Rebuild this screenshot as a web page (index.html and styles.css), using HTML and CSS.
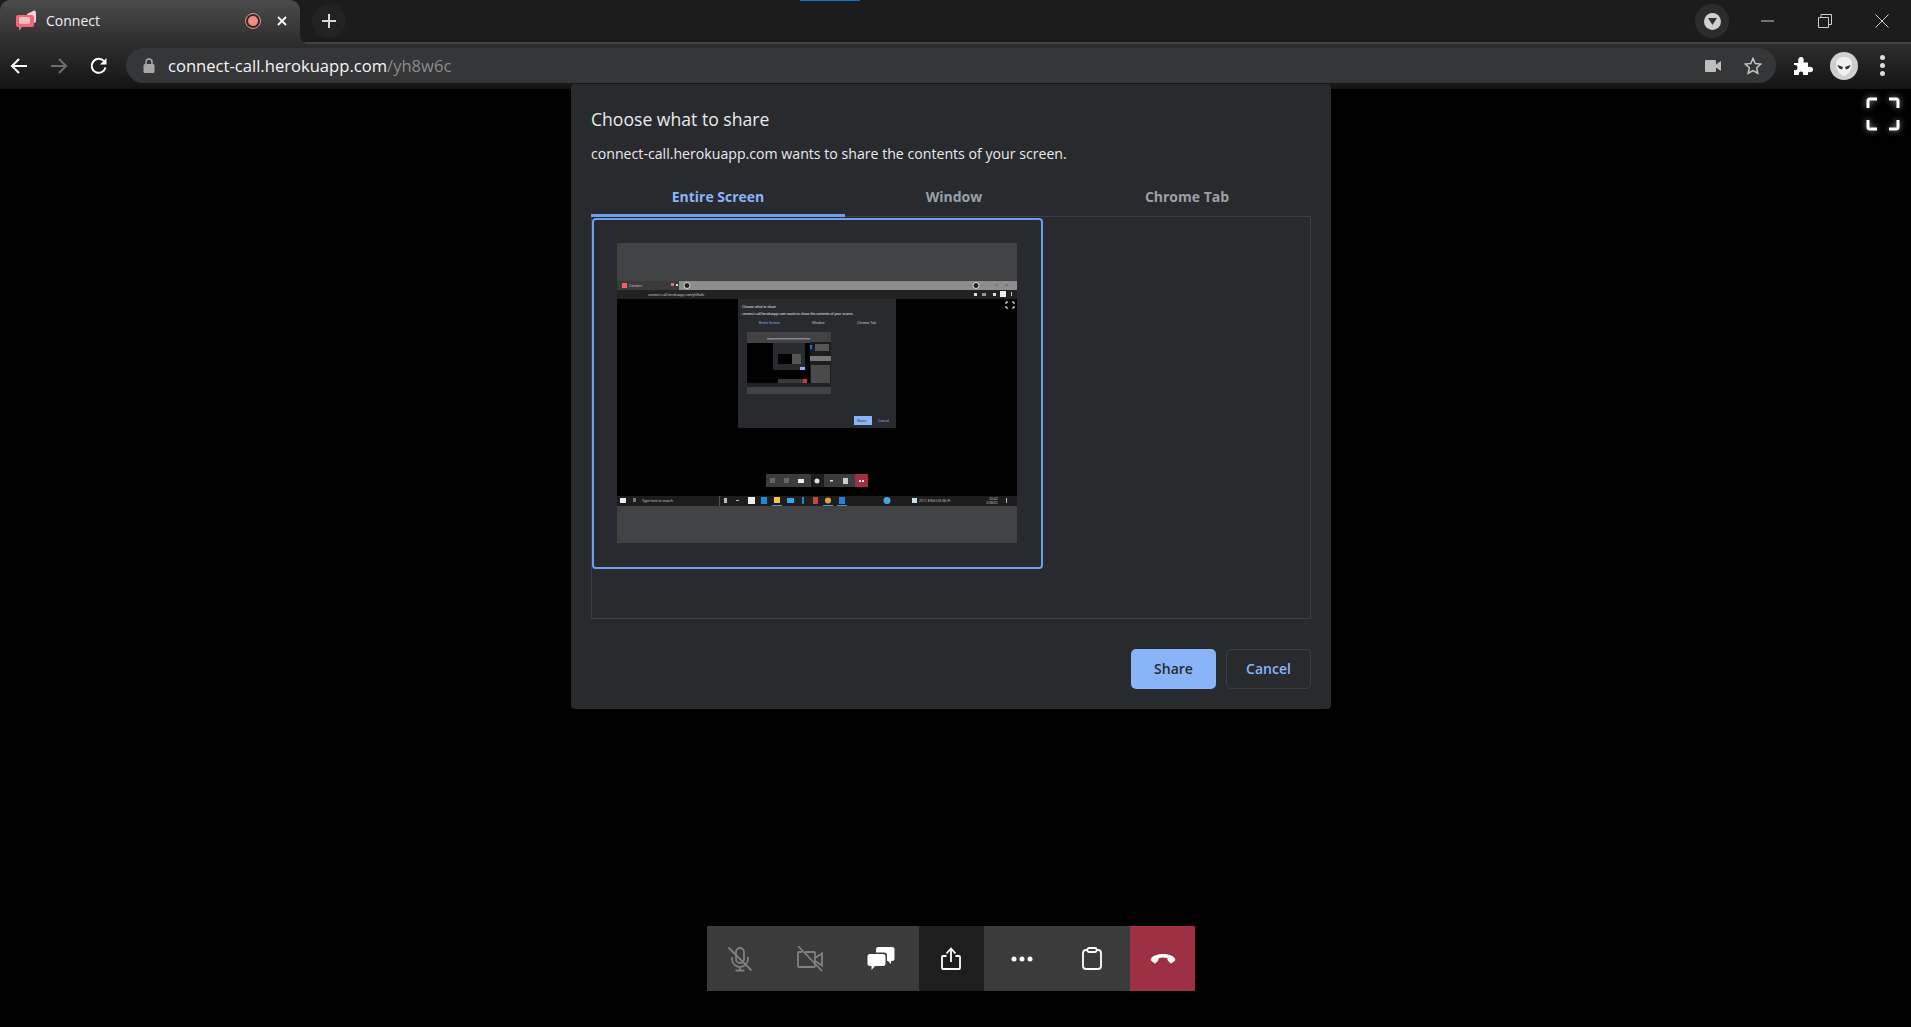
FILE: index.html
```html
<!DOCTYPE html>
<html>
<head>
  <title>Connect</title>
  <link rel="stylesheet" href="styles.css">
</head>
<body>

  <div class="tabstrip">
    <div class="tab">
      <svg class="favicon" width="20" height="22" viewBox="0 0 20 22">
        <path d="M11 4l7-3.500q2 0 2 2V11q0 2-2 2h-7z" fill="#f8d3d6"/>
        <path d="M2 5h14q2 0 2 2v8q0 2-2 2H6l-3 4v-4H2q-2 0-2-2V7q0-2 2-2z" fill="#f4667a"/>
        <rect x="3" y="7" width="11" height="7" rx="1" fill="#fbb9c0"/>
      </svg>
      <span class="tab-title">Connect</span>
      <span class="rec-dot"></span>
      <svg class="tab-close" width="12" height="12" viewBox="0 0 12 12"><path d="M2 2l8 8M10 2l-8 8" stroke="#fff" stroke-width="1.800"/></svg>
    </div>
    <div class="new-tab">
      <svg width="16" height="16" viewBox="0 0 16 16"><path d="M8 1v14M1 8h14" stroke="#d8d8d8" stroke-width="2"/></svg>
    </div>
    <div class="sharing-mark"></div>
    <div class="strip-right">
      <div class="tab-search">
        <span class="tab-search-dot"><svg width="9" height="7" viewBox="0 0 9 7"><path d="M0 0h9L4.500 7z" fill="#333"/></svg></span>
      </div>
      <div class="win-btn"><svg width="14" height="14" viewBox="0 0 14 14"><path d="M0 7h13" stroke="#ccc"/></svg></div>
      <div class="win-btn"><svg width="14" height="14" viewBox="0 0 14 14"><path d="M.5 3.500h10v10H.5zM3 3.500V.500h10.500v10H10.500" fill="none" stroke="#ccc"/></svg></div>
      <div class="win-btn"><svg width="14" height="14" viewBox="0 0 14 14"><path d="M.5.500l13 13M13.500.500l-13 13" stroke="#ccc"/></svg></div>
    </div>
  </div>

  <div class="toolbar">
    <svg class="nav-icon" width="20" height="20" viewBox="0 0 20 20"><path d="M18 10H3M10 3l-7 7 7 7" fill="none" stroke="#fff" stroke-width="2"/></svg>
    <svg class="nav-icon" width="20" height="20" viewBox="0 0 20 20"><path d="M2 10h15M10 3l7 7-7 7" fill="none" stroke="#6e6e6e" stroke-width="2"/></svg>
    <svg class="nav-icon" width="20" height="20" viewBox="0 0 20 20"><path d="M16.500 11.500A7 7 0 1 1 15 5.200" fill="none" stroke="#fff" stroke-width="2"/><path d="M17.500 2v6.500H11z" fill="#fff"/></svg>
    <div class="omnibox">
      <svg width="12" height="15" viewBox="0 0 12 15"><path d="M3 6V4a3 3 0 0 1 6 0v2" fill="none" stroke="#a8a8a8" stroke-width="1.500"/><rect x="0.500" y="6" width="11" height="9" rx="1.500" fill="#a8a8a8"/></svg>
      <div class="url">connect-call.herokuapp.com<span class="url-path">/yh8w6c</span></div>
      <div class="omni-right">
        <svg width="16" height="12" viewBox="0 0 16 12"><rect width="11" height="12" rx="1" fill="#bdbdbd"/><path d="M11 4.500L16 1v10l-5-3.500z" fill="#bdbdbd"/></svg>
        <svg width="18" height="18" viewBox="0 0 18 18"><path d="M9 1.500l2.300 5 5.400.6-4 3.700 1.100 5.400L9 13.500l-4.800 2.700 1.100-5.400-4-3.700 5.400-.6z" fill="none" stroke="#c4c4c4" stroke-width="1.500"/></svg>
      </div>
    </div>
    <svg class="puzzle" width="20" height="20" viewBox="0 0 20 20"><path d="M1 7h4.500C4.500 3 6 1 8 1s3.500 2 2.500 5.500H15v4.500c3-.8 5 .4 5 2.500S18 17 15 16v3H10c.6-2.500-.6-3.500-2-3.500S5.500 16.500 6 19H1v-5c2.500.6 3.500-.6 3.500-2.500S3.500 8.500 1 9z" fill="#fff"/></svg>
    <div class="avatar">
      <svg width="28" height="28" viewBox="0 0 28 28"><circle cx="14" cy="14" r="14" fill="#cfcfcf"/><path d="M14 5c5 0 8 3 8 7.500C22 18 17 24 14 24S6 18 6 12.500C6 8 9 5 14 5z" fill="#f0f0f0"/><path d="M7.500 13l5.500 2-1 2.500q-3.500-.5-4.500-4.500zM20.500 13L15 15l1 2.500q3.500-.5 4.500-4.500z" fill="#333"/></svg>
    </div>
    <div class="kebab"><span></span><span></span><span></span></div>
  </div>

  <svg class="expand-icon" width="34" height="34" viewBox="0 0 34 34">
    <path d="M2 11V4q0-2 2-2h7M23 2h7q2 0 2 2v7M32 23v7q0 2-2 2h-7M11 32H4q-2 0-2-2v-7" fill="none" stroke="#fff" stroke-width="3"/>
  </svg>

  <div class="dialog">
    <h2 class="dialog-title">Choose what to share</h2>
    <p class="dialog-desc">connect-call.herokuapp.com wants to share the contents of your screen.</p>
    <div class="tabs">
      <div class="share-tab active">Entire Screen</div>
      <div class="share-tab">Window</div>
      <div class="share-tab">Chrome Tab</div>
    </div>
    <div class="pane">
      <div class="screen-item">
        <svg class="thumb" width="400" height="300" viewBox="0 0 400 300">
          <rect width="400" height="300" fill="#414244"/>
          <!-- captured browser -->
          <rect y="38" width="400" height="9" fill="#8d8d8d"/>
          <rect y="38" width="62" height="9" fill="#3a3a3a"/>
          <rect x="5" y="40" width="5" height="5" fill="#f4606c"/>
          <text x="12" y="43.500" class="t-tiny">Connect</text>
          <rect x="54" y="40" width="3" height="3" fill="#e2716d"/>
          <rect x="59" y="41" width="2" height="2" fill="#ddd"/>
          <circle cx="70" cy="42.500" r="3" fill="#222" stroke="#ddd" stroke-width="1"/>
          <circle cx="359" cy="42.500" r="3" fill="#222" stroke="#ddd" stroke-width="1"/>
          <rect x="378" y="41" width="3" height="2" fill="#777"/>
          <rect x="388" y="41" width="3" height="2" fill="#777"/>
          <rect y="47" width="400" height="9" fill="#222"/>
          <text x="31" y="52.500" class="t-tiny">connect-call.herokuapp.com/yh8w6c</text>
          <rect x="357" y="50" width="3" height="3" fill="#ddd"/>
          <rect x="365" y="50" width="4" height="3" fill="#999"/>
          <rect x="376" y="50" width="3" height="3" fill="#ddd"/>
          <rect x="383" y="48" width="6" height="6" fill="#eee"/>
          <rect x="394" y="49" width="1" height="4" fill="#ccc"/>
          <rect y="56" width="400" height="197" fill="#000"/>
          <path d="M391 59h-2v2M395 59h2v2M391 65h-2v-2M395 65h2v-2" fill="none" stroke="#fff"/>
          <!-- captured dialog -->
          <rect x="121" y="56" width="158" height="129" fill="#292a2d"/>
          <text x="125" y="64.500" class="t-tiny t-light">Choose what to share</text>
          <text x="125" y="71.500" class="t-tiny t-light">connect-call.herokuapp.com wants to share the contents of your screen.</text>
          <text x="142" y="80.500" class="t-tiny t-blue">Entire Screen</text>
          <text x="195" y="80.500" class="t-tiny">Window</text>
          <text x="240" y="80.500" class="t-tiny">Chrome Tab</text>
          <rect x="130" y="89" width="84" height="62" fill="#414244"/>
          <rect x="130" y="100" width="63" height="40" fill="#000"/>
          <rect x="150" y="95" width="43" height="1.500" fill="#888"/>
          <rect x="156" y="100" width="32" height="27" fill="#292a2d"/>
          <rect x="161" y="111" width="14" height="10" fill="#000"/>
          <rect x="175" y="111" width="9" height="10" fill="#555"/>
          <rect x="183" y="124" width="5" height="3" fill="#8ab4f8"/>
          <rect x="161" y="136" width="26" height="4" fill="#3a3a3a"/>
          <rect x="186" y="136" width="4" height="4" fill="#d33"/>
          <rect x="130" y="140" width="84" height="4" fill="#222"/>
          <rect x="193" y="99" width="21" height="41" fill="#1d1d1d"/>
          <rect x="193" y="113" width="21" height="5" fill="#777"/>
          <rect x="194" y="122" width="19" height="18" fill="#4a4a4a"/>
          <rect x="193" y="102" width="2" height="4" fill="#1a73e8"/>
          <rect x="198" y="101" width="14" height="7" fill="#555"/>
          <rect x="237" y="173" width="18" height="9" fill="#8ab4f8"/>
          <text x="240" y="179" class="t-tiny t-dark">Share</text>
          <text x="261" y="179" class="t-tiny t-blue">Cancel</text>
          <!-- captured call bar -->
          <rect x="149" y="231" width="102" height="13" fill="#3c3c3c"/>
          <rect x="194" y="231" width="13" height="13" fill="#1d1d1d"/>
          <rect x="238" y="231" width="13" height="13" fill="#9e3044"/>
          <rect x="153" y="235" width="5" height="5" fill="#666"/>
          <rect x="167" y="235" width="5" height="5" fill="#666"/>
          <rect x="181" y="236" width="6" height="4" fill="#eee"/>
          <circle cx="200" cy="238" r="2.500" fill="#ddd"/>
          <rect x="213" y="237" width="3" height="1.500" fill="#ddd"/>
          <rect x="226" y="235" width="5" height="6" fill="#ccc"/>
          <rect x="242" y="237" width="2" height="2" fill="#eee"/>
          <rect x="245" y="237" width="2" height="2" fill="#eee"/>
          <!-- captured taskbar -->
          <rect y="253" width="400" height="10" fill="#1d1d1d"/>
          <rect x="3" y="255" width="6" height="5" fill="#eee"/>
          <rect x="16" y="255" width="3" height="4" fill="#777"/>
          <rect x="102" y="253" width="1" height="10" fill="#555"/>
          <text x="25" y="259" class="t-tiny">Type here to search</text>
          <rect x="107" y="255" width="3" height="5" fill="#bbb"/>
          <rect x="119" y="257" width="3" height="1" fill="#bbb"/>
          <rect x="131" y="254" width="7" height="7" fill="#eee"/>
          <rect x="144" y="254" width="6" height="7" fill="#1a8ad4"/>
          <rect x="157" y="254" width="6" height="6" fill="#f2c744"/>
          <rect x="155" y="262" width="10" height="1" fill="#4a90d9"/>
          <rect x="170" y="255" width="7" height="5" fill="#36a6e6"/>
          <rect x="185" y="254" width="2" height="7" fill="#1a8ad4"/>
          <rect x="196" y="254" width="5" height="7" fill="#c44"/>
          <circle cx="211" cy="257.500" r="3" fill="#e9a23b"/>
          <rect x="206" y="262" width="10" height="1" fill="#4a90d9"/>
          <rect x="222" y="254" width="6" height="7" fill="#2b7fd4"/>
          <rect x="220" y="262" width="10" height="1" fill="#4a90d9"/>
          <circle cx="270" cy="257.500" r="3.500" fill="#4aa3e0"/>
          <rect x="295" y="255" width="5" height="5" fill="#cde"/>
          <text x="302" y="259" class="t-tiny">25°C  ENG  US  Wi-Fi</text>
          <text x="372" y="256.500" class="t-tiny">10:42</text>
          <text x="369" y="261" class="t-tiny">1/18/21</text>
          <rect x="389" y="255" width="1" height="5" fill="#bbb"/>
        </svg>
      </div>
    </div>
    <div class="dialog-actions">
      <button class="btn btn-share">Share</button>
      <button class="btn btn-cancel">Cancel</button>
    </div>
  </div>

  <div class="callbar">
    <div class="call-btn">
      <svg width="26" height="26" viewBox="0 0 26 26" fill="none" stroke="#808080" stroke-width="1.800">
        <rect x="9" y="2" width="8" height="15" rx="4"/><path d="M5 11v2a8 8 0 0 0 16 0v-2M13 21v3M8.500 24.500h9M1.500 1.500l23 23"/>
      </svg>
    </div>
    <div class="call-btn">
      <svg width="26" height="26" viewBox="0 0 26 26" fill="none" stroke="#808080" stroke-width="1.800">
        <path d="M5 6H2q-1 0-1 1v13q0 1 1 1h15q1 0 1-1V7q0-1-1-1H8M18 12l7-4.500v12L18 15M1 0l24 25"/>
      </svg>
    </div>
    <div class="call-btn">
      <svg width="28" height="26" viewBox="0 0 28 26">
        <path d="M11 1h14q2.500 0 2.500 2.500v9q0 2.500-2.500 2.500h-1v3l-3-3h-1V9.500q0-3-3-3h-8V3.500Q9 1 11 1z" fill="#fff"/>
        <path d="M3 8h13q2.500 0 2.500 2.500v7q0 2.500-2.500 2.500H8l-3.500 4v-4H3q-2.500 0-2.500-2.500v-7Q.500 8 3 8z" fill="#fff"/>
      </svg>
    </div>
    <div class="call-btn call-btn-active">
      <svg width="20" height="23" viewBox="0 0 20 23" fill="none" stroke="#fff" stroke-width="1.800">
        <path d="M10 15V2M5.500 6.500L10 1.500l4.500 5M5.500 9H2q-1 0-1 1v11q0 1 1 1h16q1 0 1-1V10q0-1-1-1h-3.500"/>
      </svg>
    </div>
    <div class="call-btn">
      <svg width="22" height="6" viewBox="0 0 22 6"><circle cx="3" cy="3" r="2.500" fill="#fff"/><circle cx="11" cy="3" r="2.500" fill="#fff"/><circle cx="19" cy="3" r="2.500" fill="#fff"/></svg>
    </div>
    <div class="call-btn">
      <svg width="20" height="23" viewBox="0 0 20 23" fill="none" stroke="#fff" stroke-width="1.800">
        <path d="M5.500 3H4Q1 3 1 6v13q0 3 3 3h12q3 0 3-3V6q0-3-3-3h-1.500"/><rect x="5.500" y="1" width="9" height="4" rx="1.500"/>
      </svg>
    </div>
    <div class="call-btn call-btn-end">
      <svg width="26" height="12" viewBox="0 0 26 12"><path d="M13 1C8 1 3 2.500 1 5.500q-.8 1.500.5 2.500l2.500 2q1.200.8 2.200-.2L8.500 7V5.200q4.500-1.200 9 0V7l2.300 2.800q1 1 2.200.2l2.500-2q1.300-1 .5-2.500C23 2.500 18 1 13 1z" fill="#fff"/></svg>
    </div>
  </div>

</body>
</html>
```

FILE: styles.css
```css
body {
  margin: 0;
  height: 1027px;
  overflow: hidden;
  background-color: #000;
  font-family: "Open Sans", "Noto Sans", sans-serif;
  color: #e8eaed;
  position: relative;
}

/* browser chrome */
.tabstrip {
  height: 44px;
  display: flex;
  align-items: center;
  background-color: #1c1c1c;
  border-bottom: 2px solid #424242;
  box-sizing: border-box;
  position: relative;
}
.tab {
  width: 300px;
  height: 44px;
  margin-bottom: -2px;
  display: flex;
  align-items: center;
  box-sizing: border-box;
  padding: 0 12px 2px 16px;
  background: linear-gradient(#4b4b4b, #2d2d2d);
  border-radius: 10px 10px 0 0;
  position: relative;
}
.tab::after {
  content: "";
  position: absolute;
  left: 300px;
  bottom: 0;
  width: 8px;
  height: 8px;
  background: radial-gradient(circle at 100% 0, transparent 7.500px, #2d2d2d 8px);
}
.favicon {
  margin-right: 10px;
}
.tab-title {
  flex: 1;
  font-size: 14px;
  color: #f1f1f1;
  margin-top: -2px;
}
.rec-dot {
  width: 10px;
  height: 10px;
  border-radius: 50%;
  background-color: #f28b82;
  border: 2px solid #2b2b2b;
  outline: 1px solid #f28b82;
  margin-right: 16px;
}
.new-tab {
  width: 34px;
  height: 34px;
  margin-left: 12px;
  border-radius: 50%;
  background-color: #222;
  display: flex;
  align-items: center;
  justify-content: center;
}
.sharing-mark {
  position: absolute;
  top: 0;
  left: 800px;
  width: 60px;
  height: 1px;
  background-color: #0a74d4;
}
.strip-right {
  margin-left: auto;
  padding-right: 1px;
  display: flex;
  align-items: center;
  gap: 1px;
}
.tab-search {
  width: 34px;
  height: 34px;
  border-radius: 50%;
  background-color: #2c2c2c;
  display: flex;
  align-items: center;
  justify-content: center;
  margin-right: 10px;
}
.tab-search-dot {
  width: 17px;
  height: 17px;
  border-radius: 50%;
  background-color: #d0d0d0;
  display: flex;
  align-items: center;
  justify-content: center;
}
.win-btn {
  width: 56px;
  height: 36px;
  align-self: flex-start;
  display: flex;
  align-items: center;
  justify-content: center;
}
.toolbar {
  height: 45px;
  display: flex;
  align-items: center;
  box-sizing: border-box;
  padding: 0 0 2px 9px;
  gap: 20px;
  background: linear-gradient(#2d2d2d, #141414);
}
.omnibox {
  width: 1650px;
  margin-left: -3px;
  margin-right: -3px;
  height: 35px;
  border-radius: 18px;
  background-color: #353637;
  display: flex;
  align-items: center;
  padding-left: 17px;
  box-sizing: border-box;
}
.url {
  margin-left: 13px;
  font-size: 16.600px;
  color: #f4f4f4;
}
.url-path {
  color: #8b8b8b;
}
.omni-right {
  margin-left: auto;
  display: flex;
  align-items: center;
  gap: 23px;
  padding-right: 14px;
}
.avatar {
  width: 28px;
  height: 28px;
  margin-left: -3px;
}
.kebab {
  display: flex;
  flex-direction: column;
  gap: 3px;
  margin-left: 2px;
}
.kebab span {
  width: 5px;
  height: 5px;
  border-radius: 50%;
  background-color: #ddd;
}
.expand-icon {
  position: absolute;
  top: 97px;
  left: 1866px;
  filter: drop-shadow(0 0 3px rgba(255,255,255,0.6));
}

/* share dialog */
.dialog {
  position: absolute;
  top: 84px;
  left: 571px;
  width: 760px;
  height: 625px;
  box-sizing: border-box;
  padding: 23px 20px 0;
  background-color: #292a2d;
  border-radius: 4px;
}
.dialog-title {
  margin: 0;
  font-size: 17.600px;
  font-weight: 400;
  line-height: 24px;
}
.dialog-desc {
  margin: 13px 0 0;
  font-size: 14.150px;
  line-height: 20px;
}
.tabs {
  margin-top: 16px;
  display: grid;
  grid-template-columns: 254px 218px 248px;
  height: 37px;
}
.share-tab {
  font-size: 14px;
  font-weight: 700;
  text-align: center;
  line-height: 33px;
  color: #9aa0a6;
  border-bottom: 1px solid #3c4043;
}
.share-tab.active {
  color: #8ab4f8;
  border-bottom: 3px solid #6f9fec;
}
.pane {
  height: 402px;
  border: 1px solid #3c4043;
  border-top: none;
  box-sizing: border-box;
  padding-top: 1px;
}
.screen-item {
  width: 451px;
  height: 351px;
  box-sizing: border-box;
  border: 2px solid #6f9fec;
  border-radius: 4px;
  padding: 23px 0 0 23px;
}
.thumb {
  display: block;
}
.t-tiny {
  font-family: "Liberation Sans", sans-serif;
  font-size: 3.500px;
  fill: #c8c8c8;
}
.t-light {
  fill: #e8eaed;
}
.t-blue {
  fill: #8ab4f8;
}
.t-dark {
  fill: #292a2d;
}
.dialog-actions {
  margin-top: 30px;
  display: flex;
  justify-content: flex-end;
  gap: 10px;
}
.btn {
  width: 85px;
  height: 40px;
  padding: 0 0 2px;
  border-radius: 5px;
  font-family: "Open Sans", "Noto Sans", sans-serif;
  font-size: 14px;
  font-weight: 600;
  cursor: pointer;
}
.btn-share {
  background-color: #8ab4f8;
  color: #292a2d;
  border: none;
}
.btn-cancel {
  background-color: transparent;
  color: #8ab4f8;
  border: 1px solid #3c4043;
}

/* call controls */
.callbar {
  position: absolute;
  top: 926px;
  left: 707px;
  width: 488px;
  height: 65px;
  display: flex;
  background-color: #3b3b3b;
  justify-content: space-between;
}
.call-btn {
  width: 65px;
  display: flex;
  align-items: center;
  justify-content: center;
}
.call-btn-active {
  background-color: #1e1e1e;
}
.call-btn-end {
  background-color: #9e3044;
}
```
